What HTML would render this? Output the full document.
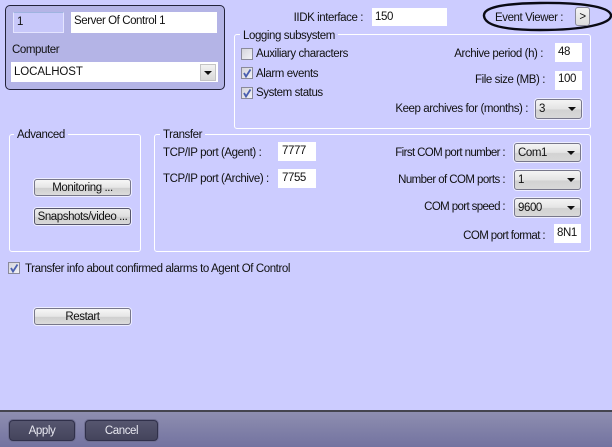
<!DOCTYPE html>
<html><head><meta charset="utf-8">
<style>
html,body{margin:0;padding:0}
body{width:612px;height:447px;overflow:hidden;position:relative;background:#ccccff;font:11.5px/14px "Liberation Sans",sans-serif;letter-spacing:-.42px;color:#111}
div,svg{position:absolute;box-sizing:border-box}
.t{white-space:nowrap;height:14px}
.r{text-align:right;width:200px}
.in{background:#fff;white-space:nowrap;padding-left:5px;line-height:18px}
.g{border:1.5px solid #fff;border-radius:3px}
.lg{background:#ccccff;padding:0 3px;white-space:nowrap;height:14px}
.b{border:1px solid #77778a;border-radius:3px;background:linear-gradient(#f6f6f6 0,#e6e6e6 50%,#cfcfcf 55%,#dcdcdc 100%);text-align:center;line-height:16px;white-space:nowrap;box-shadow:0 0 0 1px #eeeeff}
.c{border:1px solid #77778a;border-radius:3px;background:linear-gradient(#f4f4f4,#e4e4e4 50%,#d2d2d2 55%,#d8d8d8);padding-left:3px;line-height:19px;box-shadow:0 0 0 1px #eeeeff}
.c:after{content:"";position:absolute;right:5px;top:7px;border:4px solid transparent;border-top:4px solid #111;border-bottom:0}
.k{width:12px;height:12px;border:1px solid #8a8a9a;background:linear-gradient(135deg,#d4d4dc,#f2f2f6)}
.d{border:1px solid #30304a;border-radius:4px;background:linear-gradient(#55556f,#44445c);color:#e8e8f0;text-align:center;line-height:21px;box-shadow:0 0 0 1px #6e6e90}
</style></head><body>

<div style="left:5px;top:5px;width:220px;height:85px;background:#b4b4e6;border:1.5px solid #22223a;border-radius:5px"></div>
<div class="in" style="left:13px;top:12px;width:51px;height:21px;background:#c8c8fa;border:1px solid #e4e4ff;border-top-color:#9fb4e0;padding-left:3px;line-height:18px">1</div>
<div class="in" style="left:71px;top:12px;width:146px;height:21px;padding-left:3px;line-height:18px">Server Of Control 1</div>
<div class="t" style="left:12px;top:43px">Computer</div>
<div class="in" style="left:11px;top:62px;width:207px;height:20px;padding-left:3px;line-height:21px;letter-spacing:-.1px">LOCALHOST</div>
<div style="left:200px;top:64px;width:16px;height:17px;background:linear-gradient(#f2f2f2,#d9d9d9);border:1px solid #c4c4c4"></div>
<div style="left:204px;top:71px;width:0;height:0;border:4px solid transparent;border-top:4px solid #111;border-bottom:0"></div>

<div class="t r" style="left:163px;top:11px">IIDK interface :</div>
<div class="in" style="left:372px;top:8px;width:75px;height:18px;line-height:18px;padding-left:3px">150</div>

<svg style="left:478px;top:0" width="134" height="33" viewBox="0 0 134 33"><path d="M6 16C5 8 22 3.500 62 3C100 2.500 131 6 133 15C134 24 105 30 62 30C24 30 7 25 6 16Z" fill="none" stroke="#0a0a14" stroke-width="2.400"/></svg>
<div class="t" style="left:495px;top:11px">Event Viewer :</div>
<div class="b" style="left:575px;top:7px;width:15px;height:19px;line-height:18px;background:linear-gradient(#f4f4f4,#dcdcdc);border-color:#8a8a9a;box-shadow:none">&gt;</div>

<div class="g" style="left:234px;top:34px;width:357px;height:95px"></div>
<div class="lg" style="left:240px;top:29px">Logging subsystem</div>
<div class="k" style="left:241px;top:48px"></div>
<div class="t" style="left:256px;top:47px">Auxiliary characters</div>
<div class="k" style="left:241px;top:67px"></div>
<svg style="left:241px;top:67px" width="12" height="12"><path d="M3 6L5 9.500L9.500 2.500" fill="none" stroke="#4a5fb0" stroke-width="1.800"/></svg>
<div class="t" style="left:256px;top:67px">Alarm events</div>
<div class="k" style="left:241px;top:87px"></div>
<svg style="left:241px;top:87px" width="12" height="12"><path d="M3 6L5 9.500L9.500 2.500" fill="none" stroke="#4a5fb0" stroke-width="1.800"/></svg>
<div class="t" style="left:256px;top:86px">System status</div>

<div class="t r" style="left:343px;top:47px">Archive period (h) :</div>
<div class="in" style="left:555px;top:43px;width:27px;height:19px;padding-left:3px;line-height:18px">48</div>
<div class="t r" style="left:345px;top:73px">File size (MB) :</div>
<div class="in" style="left:555px;top:71px;width:27px;height:19px;padding-left:3px;line-height:17px">100</div>
<div class="t r" style="left:328px;top:102px">Keep archives for (months) :</div>
<div class="c" style="left:535px;top:99px;width:47px;height:20px">3</div>

<div class="g" style="left:9px;top:134px;width:132px;height:118px"></div>
<div class="lg" style="left:14px;top:128px">Advanced</div>
<div class="b" style="left:34px;top:179px;width:97px;height:17px">Monitoring ...</div>
<div class="b" style="left:34px;top:208px;width:97px;height:17px;background:linear-gradient(#ececec,#dedede 50%,#cfcfcf 55%,#d8d8d8);border-color:#55556a">Snapshots/video ...</div>

<div class="g" style="left:154px;top:134px;width:437px;height:118px"></div>
<div class="lg" style="left:160px;top:128px">Transfer</div>
<div class="t" style="left:163px;top:146px">TCP/IP port (Agent) :</div>
<div class="in" style="left:278px;top:142px;width:38px;height:19px;padding-left:4px;line-height:19px">7777</div>
<div class="t" style="left:163px;top:172px">TCP/IP port (Archive) :</div>
<div class="in" style="left:278px;top:169px;width:38px;height:19px;padding-left:4px;line-height:19px">7755</div>

<div class="t r" style="left:305px;top:146px;letter-spacing:-.62px">First COM port number :</div>
<div class="c" style="left:514px;top:143px;width:67px;height:19px;line-height:19px">Com1</div>
<div class="t r" style="left:305px;top:173px;letter-spacing:-.57px">Number of COM ports :</div>
<div class="c" style="left:514px;top:170px;width:67px;height:20px">1</div>
<div class="t r" style="left:305px;top:200px;letter-spacing:-.62px">COM port speed :</div>
<div class="c" style="left:514px;top:198px;width:67px;height:19px;line-height:18px">9600</div>
<div class="t r" style="left:345px;top:229px;letter-spacing:-.6px">COM port format :</div>
<div class="in" style="left:554px;top:224px;width:27px;height:19px;padding-left:3px;line-height:19px">8N1</div>

<div class="k" style="left:8px;top:262px"></div>
<svg style="left:8px;top:262px" width="12" height="12"><path d="M3 6L5 9.500L9.500 2.500" fill="none" stroke="#4a5fb0" stroke-width="1.800"/></svg>
<div class="t" style="left:25px;top:262px">Transfer info about confirmed alarms to Agent Of Control</div>

<div class="b" style="left:34px;top:308px;width:97px;height:17px">Restart</div>

<div style="left:0;top:410px;width:612px;height:37px;background:linear-gradient(#8e8eb0,#7373a0);border-top:2px solid #44444e"></div>
<div class="d" style="left:9px;top:420px;width:66px;height:21px">Apply</div>
<div class="d" style="left:85px;top:420px;width:73px;height:21px">Cancel</div>

</body></html>
